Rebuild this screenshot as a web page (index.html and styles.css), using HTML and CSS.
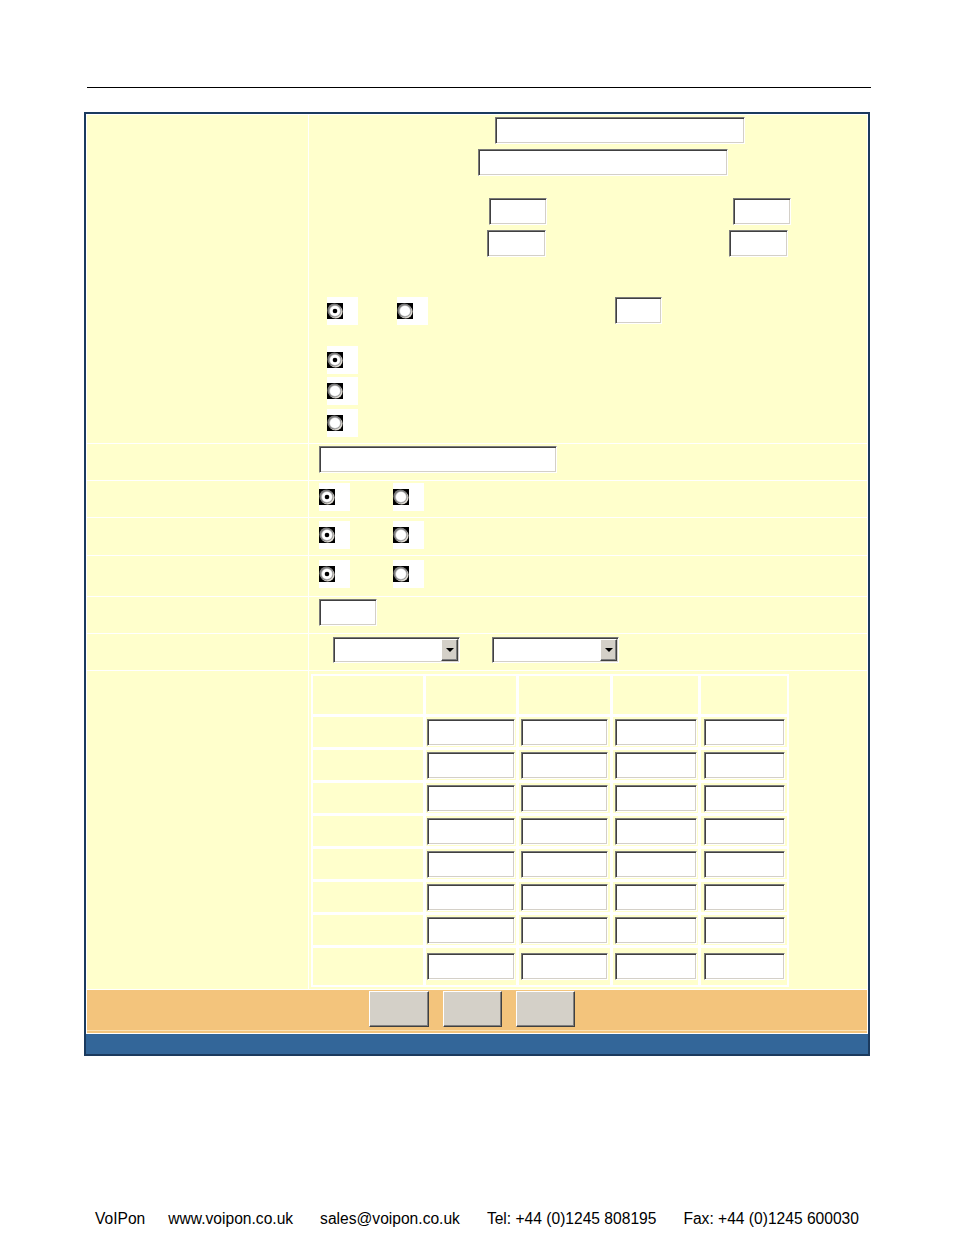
FILE: index.html
```html
<!DOCTYPE html>
<html lang="en">
<head>
<meta charset="utf-8">
<title>VoIPon settings</title>
<link rel="stylesheet" href="styles.css">
</head>
<body>
<div class="page">
  <div class="rule"></div>

  <div class="panel">
    <div class="grid">
      <!-- Row A -->
      <div class="cell"></div>
      <div class="cell row-a">
        <div class="line gap-2"><input type="text" class="field w250 ml-186"></div>
        <div class="line gap-5"><input type="text" class="field w250 ml-169"></div>
        <div class="line gap-22"><input type="text" class="field w58 ml-180"><input type="text" class="field w58 ml-186"></div>
        <div class="line gap-5"><input type="text" class="field w59 ml-178"><input type="text" class="field w59 ml-183"></div>
        <div class="line gap-40">
          <span class="radio-box ml-18"><svg class="radio" viewBox="0 0 16 16" width="16" height="16"><rect width="16" height="16" fill="#000"/><circle cx="8.6" cy="8.6" r="7" fill="#dedad2"/><circle cx="7.4" cy="7.4" r="7" fill="#7a7a7a"/><circle cx="8" cy="8" r="5.8" fill="#c8c8c8"/><circle cx="8" cy="8" r="5" fill="#fff"/><circle cx="8" cy="8" r="2.3" fill="#000"/></svg></span>
          <span class="radio-box ml-39"><svg class="radio" viewBox="0 0 16 16" width="16" height="16"><rect width="16" height="16" fill="#000"/><circle cx="8.6" cy="8.6" r="7" fill="#dedad2"/><circle cx="7.4" cy="7.4" r="7" fill="#7a7a7a"/><circle cx="8" cy="8" r="5.8" fill="#c8c8c8"/><circle cx="8" cy="8" r="5" fill="#fff"/></svg></span>
          <input type="text" class="field w47 ml-187">
        </div>
        <div class="line gap-21">
          <span class="radio-box ml-18"><svg class="radio" viewBox="0 0 16 16" width="16" height="16"><rect width="16" height="16" fill="#000"/><circle cx="8.6" cy="8.6" r="7" fill="#dedad2"/><circle cx="7.4" cy="7.4" r="7" fill="#7a7a7a"/><circle cx="8" cy="8" r="5.8" fill="#c8c8c8"/><circle cx="8" cy="8" r="5" fill="#fff"/><circle cx="8" cy="8" r="2.3" fill="#000"/></svg></span>
        </div>
        <div class="line gap-3">
          <span class="radio-box ml-18"><svg class="radio" viewBox="0 0 16 16" width="16" height="16"><rect width="16" height="16" fill="#000"/><circle cx="8.6" cy="8.6" r="7" fill="#dedad2"/><circle cx="7.4" cy="7.4" r="7" fill="#7a7a7a"/><circle cx="8" cy="8" r="5.8" fill="#c8c8c8"/><circle cx="8" cy="8" r="5" fill="#fff"/></svg></span>
        </div>
        <div class="line gap-4">
          <span class="radio-box ml-18"><svg class="radio" viewBox="0 0 16 16" width="16" height="16"><rect width="16" height="16" fill="#000"/><circle cx="8.6" cy="8.6" r="7" fill="#dedad2"/><circle cx="7.4" cy="7.4" r="7" fill="#7a7a7a"/><circle cx="8" cy="8" r="5.8" fill="#c8c8c8"/><circle cx="8" cy="8" r="5" fill="#fff"/></svg></span>
        </div>
      </div>

      <!-- Row B -->
      <div class="cell"></div>
      <div class="cell row-b">
        <div class="line gap-2"><input type="text" class="field w238 ml-10"></div>
      </div>

      <!-- Row C -->
      <div class="cell"></div>
      <div class="cell row-c">
        <div class="line gap-2">
          <span class="radio-box ml-10"><svg class="radio" viewBox="0 0 16 16" width="16" height="16"><rect width="16" height="16" fill="#000"/><circle cx="8.6" cy="8.6" r="7" fill="#dedad2"/><circle cx="7.4" cy="7.4" r="7" fill="#7a7a7a"/><circle cx="8" cy="8" r="5.8" fill="#c8c8c8"/><circle cx="8" cy="8" r="5" fill="#fff"/><circle cx="8" cy="8" r="2.3" fill="#000"/></svg></span>
          <span class="radio-box ml-43"><svg class="radio" viewBox="0 0 16 16" width="16" height="16"><rect width="16" height="16" fill="#000"/><circle cx="8.6" cy="8.6" r="7" fill="#dedad2"/><circle cx="7.4" cy="7.4" r="7" fill="#7a7a7a"/><circle cx="8" cy="8" r="5.8" fill="#c8c8c8"/><circle cx="8" cy="8" r="5" fill="#fff"/></svg></span>
        </div>
      </div>

      <!-- Row D -->
      <div class="cell"></div>
      <div class="cell row-d">
        <div class="line gap-3">
          <span class="radio-box ml-10"><svg class="radio" viewBox="0 0 16 16" width="16" height="16"><rect width="16" height="16" fill="#000"/><circle cx="8.6" cy="8.6" r="7" fill="#dedad2"/><circle cx="7.4" cy="7.4" r="7" fill="#7a7a7a"/><circle cx="8" cy="8" r="5.8" fill="#c8c8c8"/><circle cx="8" cy="8" r="5" fill="#fff"/><circle cx="8" cy="8" r="2.3" fill="#000"/></svg></span>
          <span class="radio-box ml-43"><svg class="radio" viewBox="0 0 16 16" width="16" height="16"><rect width="16" height="16" fill="#000"/><circle cx="8.6" cy="8.6" r="7" fill="#dedad2"/><circle cx="7.4" cy="7.4" r="7" fill="#7a7a7a"/><circle cx="8" cy="8" r="5.8" fill="#c8c8c8"/><circle cx="8" cy="8" r="5" fill="#fff"/></svg></span>
        </div>
      </div>

      <!-- Row E -->
      <div class="cell"></div>
      <div class="cell row-e">
        <div class="line gap-4">
          <span class="radio-box ml-10"><svg class="radio" viewBox="0 0 16 16" width="16" height="16"><rect width="16" height="16" fill="#000"/><circle cx="8.6" cy="8.6" r="7" fill="#dedad2"/><circle cx="7.4" cy="7.4" r="7" fill="#7a7a7a"/><circle cx="8" cy="8" r="5.8" fill="#c8c8c8"/><circle cx="8" cy="8" r="5" fill="#fff"/><circle cx="8" cy="8" r="2.3" fill="#000"/></svg></span>
          <span class="radio-box ml-43"><svg class="radio" viewBox="0 0 16 16" width="16" height="16"><rect width="16" height="16" fill="#000"/><circle cx="8.6" cy="8.6" r="7" fill="#dedad2"/><circle cx="7.4" cy="7.4" r="7" fill="#7a7a7a"/><circle cx="8" cy="8" r="5.8" fill="#c8c8c8"/><circle cx="8" cy="8" r="5" fill="#fff"/></svg></span>
        </div>
      </div>

      <!-- Row F -->
      <div class="cell"></div>
      <div class="cell row-f">
        <div class="line gap-2"><input type="text" class="field w58 ml-10"></div>
      </div>

      <!-- Row G -->
      <div class="cell"></div>
      <div class="cell row-g">
        <div class="line gap-3">
          <div class="select w127 ml-24"><span class="select-btn"><span class="caret"></span></span></div>
          <div class="select w127 ml-32"><span class="select-btn"><span class="caret"></span></span></div>
        </div>
      </div>

      <!-- Row H -->
      <div class="cell"></div>
      <div class="cell row-h">
        <div class="matrix">
          <div class="mcell"></div><div class="mcell"></div><div class="mcell"></div><div class="mcell"></div><div class="mcell"></div>

          <div class="mcell"></div>
          <div class="mcell"><input type="text" class="field w88"></div>
          <div class="mcell"><input type="text" class="field w87"></div>
          <div class="mcell"><input type="text" class="field w82"></div>
          <div class="mcell"><input type="text" class="field w81"></div>

          <div class="mcell"></div>
          <div class="mcell"><input type="text" class="field w88"></div>
          <div class="mcell"><input type="text" class="field w87"></div>
          <div class="mcell"><input type="text" class="field w82"></div>
          <div class="mcell"><input type="text" class="field w81"></div>

          <div class="mcell"></div>
          <div class="mcell"><input type="text" class="field w88"></div>
          <div class="mcell"><input type="text" class="field w87"></div>
          <div class="mcell"><input type="text" class="field w82"></div>
          <div class="mcell"><input type="text" class="field w81"></div>

          <div class="mcell"></div>
          <div class="mcell"><input type="text" class="field w88"></div>
          <div class="mcell"><input type="text" class="field w87"></div>
          <div class="mcell"><input type="text" class="field w82"></div>
          <div class="mcell"><input type="text" class="field w81"></div>

          <div class="mcell"></div>
          <div class="mcell"><input type="text" class="field w88"></div>
          <div class="mcell"><input type="text" class="field w87"></div>
          <div class="mcell"><input type="text" class="field w82"></div>
          <div class="mcell"><input type="text" class="field w81"></div>

          <div class="mcell"></div>
          <div class="mcell"><input type="text" class="field w88"></div>
          <div class="mcell"><input type="text" class="field w87"></div>
          <div class="mcell"><input type="text" class="field w82"></div>
          <div class="mcell"><input type="text" class="field w81"></div>

          <div class="mcell"></div>
          <div class="mcell"><input type="text" class="field w88"></div>
          <div class="mcell"><input type="text" class="field w87"></div>
          <div class="mcell"><input type="text" class="field w82"></div>
          <div class="mcell"><input type="text" class="field w81"></div>

          <div class="mcell"></div>
          <div class="mcell"><input type="text" class="field w88"></div>
          <div class="mcell"><input type="text" class="field w87"></div>
          <div class="mcell"><input type="text" class="field w82"></div>
          <div class="mcell"><input type="text" class="field w81"></div>
        </div>
      </div>

      <!-- Buttons -->
      <div class="cell btn-row">
        <button type="button" class="btn w60 ml-282"></button>
        <button type="button" class="btn w59 ml-14"></button>
        <button type="button" class="btn w59 ml-14"></button>
      </div>
    </div>
    <div class="blue-bar"></div>
  </div>

  <div class="footer">
    <span class="f-item">VoIPon</span>
    <span class="f-item f-first-gap">www.voipon.co.uk</span>
    <span class="f-item f-gap">sales@voipon.co.uk</span>
    <span class="f-item f-gap">Tel: +44 (0)1245 808195</span>
    <span class="f-item f-gap-tel">Fax: +44 (0)1245 600030</span>
  </div>
</div>
</body>
</html>
```

FILE: styles.css
```css
* {
  box-sizing: border-box;
}

body {
  margin: 0;
  background: #ffffff;
  font-family: "Liberation Sans", Arial, sans-serif;
  color: #000;
}

.page {
  width: 954px;
  padding-top: 87px;
}

.rule {
  margin-left: 87px;
  width: 784px;
  height: 1px;
  background: #000;
}

.panel {
  margin-left: 84px;
  margin-top: 24px;
  width: 786px;
  border: 2px solid #1b3a5e;
  background: #336699;
}

.grid {
  display: grid;
  grid-template-columns: 221px 558px;
  gap: 1px;
  padding: 1px;
  background: #ffffff;
}

.cell {
  background: #ffffcc;
}

.row-a { height: 328px; }
.row-b { height: 36px; }
.row-c { height: 36px; }
.row-d { height: 37px; }
.row-e { height: 40px; }
.row-f { height: 36px; }
.row-g { height: 36px; }
.row-h { height: 318px; }

.line {
  display: flex;
  align-items: flex-start;
}

.gap-2 { margin-top: 2px; }
.gap-3 { margin-top: 3px; }
.gap-4 { margin-top: 4px; }
.gap-5 { margin-top: 5px; }
.gap-21 { margin-top: 21px; }
.gap-22 { margin-top: 22px; }
.gap-40 { margin-top: 40px; }

.ml-10 { margin-left: 10px; }
.ml-14 { margin-left: 14px; }
.ml-18 { margin-left: 18px; }
.ml-24 { margin-left: 24px; }
.ml-32 { margin-left: 32px; }
.ml-39 { margin-left: 39px; }
.ml-43 { margin-left: 43px; }
.ml-169 { margin-left: 169px; }
.ml-178 { margin-left: 178px; }
.ml-180 { margin-left: 180px; }
.ml-183 { margin-left: 183px; }
.ml-186 { margin-left: 186px; }
.ml-187 { margin-left: 187px; }
.ml-282 { margin-left: 282px; }

/* sunken text field */
.field {
  display: block;
  height: 27px;
  margin-top: 0;
  margin-bottom: 0;
  padding: 0 3px;
  background: #ffffff;
  border: 1px solid;
  border-color: #7a7a7a #ffffff #ffffff #7a7a7a;
  box-shadow: inset 1px 1px 0 #404040, inset -1px -1px 0 #d4d0c8;
  border-radius: 0;
  outline: none;
  font: 13px "Liberation Sans", Arial, sans-serif;
}

.w47 { width: 47px; }
.w58 { width: 58px; }
.w59 { width: 59px; }
.w60 { width: 60px; }
.w81 { width: 81px; }
.w82 { width: 82px; }
.w87 { width: 87px; }
.w88 { width: 88px; }
.w127 { width: 127px; }
.w238 { width: 238px; }
.w250 { width: 250px; }

/* radio with white backing */
.radio-box {
  display: flex;
  align-items: center;
  width: 31px;
  height: 28px;
  background: #ffffff;
}

.radio {
  display: block;
}

/* drop-down list */
.select {
  display: flex;
  justify-content: flex-end;
  height: 26px;
  padding: 1px;
  background: #ffffff;
  border: 1px solid;
  border-color: #7a7a7a #ffffff #ffffff #7a7a7a;
  box-shadow: inset 1px 1px 0 #404040, inset -1px -1px 0 #d4d0c8;
}

.select-btn {
  display: flex;
  align-items: center;
  justify-content: center;
  width: 17px;
  height: 22px;
  background: #d4d0c8;
  border: 1px solid;
  border-color: #ffffff #404040 #404040 #ffffff;
  box-shadow: inset -1px -1px 0 #808080;
}

.caret {
  width: 0;
  height: 0;
  border-left: 4px solid transparent;
  border-right: 4px solid transparent;
  border-top: 4px solid #000;
}

/* inner matrix table */
.matrix {
  display: grid;
  grid-template-columns: 110px 90px 91px 85px 86px;
  grid-template-rows: 38px repeat(7, 30px) 37px;
  gap: 3px;
  width: max-content;
  margin: 3px 0 0 2px;
  padding: 2px;
  background: #ffffff;
}

.mcell {
  display: flex;
  align-items: center;
  justify-content: center;
  background: #ffffcc;
}

/* button row */
.btn-row {
  grid-column: 1 / -1;
  display: flex;
  align-items: flex-start;
  height: 43px;
  padding-top: 1px;
  background: #f3c47c;
  box-shadow: inset 0 -2px 0 #f3c47c, inset 0 -3px 0 #fbe2b6;
}

.btn {
  height: 36px;
  padding: 0;
  background: #d4d0c8;
  border: 1px solid;
  border-color: #ffffff #404040 #404040 #ffffff;
  box-shadow: inset -1px -1px 0 #808080;
  border-radius: 0;
}

.blue-bar {
  height: 20px;
  background: #336699;
}

/* footer */
.footer {
  display: flex;
  margin-top: 154px;
  padding-left: 95px;
  font-size: 15.6px;
  line-height: 18px;
  white-space: nowrap;
}

.f-first-gap { margin-left: 23px; }
.f-gap { margin-left: 27px; }
.f-gap-tel { margin-left: 27px; }
```
